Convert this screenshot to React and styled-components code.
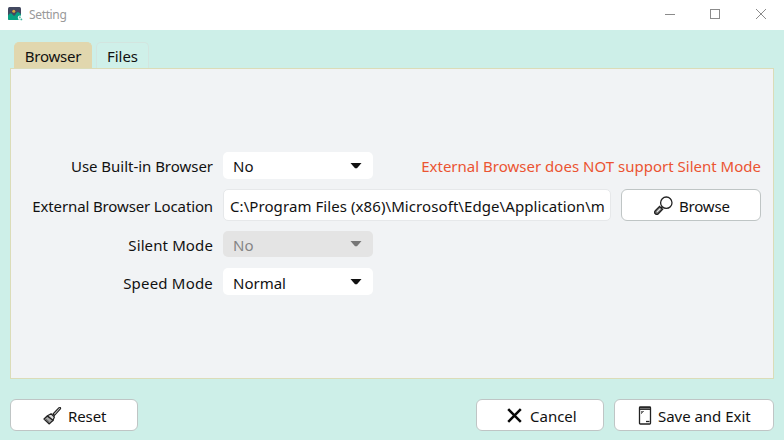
import React from 'react';
import styled, { createGlobalStyle } from 'styled-components';

const GlobalStyle = createGlobalStyle`
  * { box-sizing: border-box; }
  body { margin: 0; background: #cdefe8; overflow: hidden; }
  svg { display: block; flex: none; }
`;

const Window = styled.div`
  width: 784px;
  height: 440px;
  display: flex;
  flex-direction: column;
  background: #cdefe8;
  color: #111;
  font: 15px/20px "Noto Sans", "Open Sans", sans-serif;
`;

const TitleBar = styled.header`
  height: 30px;
  flex: none;
  display: flex;
  align-items: center;
  padding: 0 17px 2px 7px;
  background: #fff;
  color: #999;
`;

const Title = styled.span`
  margin-left: 6px;
  padding-top: 2px;
  font-size: 12px;
  letter-spacing: -0.35px;
  flex: 1;
`;

const WindowControls = styled.div`
  display: flex;
  gap: 33px;
  svg:last-child { margin-left: 1px; }
`;

const Label = styled.span`
  white-space: pre;
  letter-spacing: ${(p) => p.$spacing || 0}px;
`;

const TabBar = styled.nav`
  display: flex;
  gap: 4px;
  padding: 12px 14px 0;
  height: 38px;
  flex: none;
`;

const Tab = styled.div`
  width: ${(p) => p.$width}px;
  display: flex;
  justify-content: center;
  padding-top: 3px;
  border: 1px solid ${(p) => (p.$active ? '#e1d7ae' : '#d3e5df')};
  border-bottom: 0;
  border-radius: 5px 5px 0 0;
  background: ${(p) => (p.$active ? '#e1d7ae' : '#cff0e9')};
`;

const Panel = styled.main`
  height: 311px;
  margin: 0 10px;
  padding: 83px 12px 0 10px;
  border: 1px solid #dbdcb8;
  background: #f1f3f5;
`;

const Form = styled.div`
  display: grid;
  grid-template-columns: 192px 1fr;
  grid-template-rows: 27px 32px 26px 28px;
  row-gap: 10px;
  column-gap: 10px;
  align-items: stretch;
`;

const FieldName = styled.label`
  display: flex;
  align-items: center;
  justify-content: flex-end;
  padding-top: ${(p) => p.$drop || 1}px;
`;

const FieldArea = styled.div`
  display: flex;
  justify-content: space-between;
  padding-top: ${(p) => p.$drop || 0}px;
`;

const Select = styled.div`
  width: 150px;
  display: flex;
  align-items: center;
  justify-content: space-between;
  padding: ${(p) => p.$drop || 1}px 11px 0 10px;
  border-radius: 5px;
  background: ${(p) => (p.$disabled ? '#e4e4e4' : '#fff')};
  color: ${(p) => (p.$disabled ? '#858585' : '#111')};
  svg { margin-top: -1px; }
`;

const Warning = styled.div`
  display: flex;
  align-items: center;
  padding-top: 1px;
  color: #eb5432;
`;

const PathInput = styled.div`
  width: 388px;
  display: flex;
  align-items: center;
  padding: 2px 5px 0 6px;
  overflow: hidden;
  border: 1px solid #e6e8ea;
  border-radius: 5px;
  background: #fff;
`;

const Button = styled.button`
  width: ${(p) => p.$width}px;
  height: 32px;
  display: flex;
  align-items: center;
  padding: 2px 0 0 ${(p) => p.$inset}px;
  gap: ${(p) => p.$gap}px;
  border: 1px solid #bfc5c5;
  border-radius: 6px;
  background: #fff;
  color: #111;
  font: inherit;
  svg { margin-top: -1px; }
`;

const Footer = styled.footer`
  display: flex;
  gap: 10px;
  padding: 20px 10px 0;
`;

const Spacer = styled.div`
  flex: 1;
`;

const AppIcon = () => (
  <svg width="16" height="16" viewBox="0 -1 16 16">
    <rect x="1" y="0" width="13" height="13" rx="1.500" fill="#424860" />
    <path d="M1 8.500Q3.500 4.500 5.500 7.500T9 6.500Q11 3 14 7.500v4L12.500 13h-10A1.500 1.500 0 0 1 1 11.500z" fill="#08a283" />
    <circle cx="6.800" cy="4.300" r="1.500" fill="#d8a43e" />
    <circle cx="13" cy="10.800" r="2.200" fill="#fff" />
    <circle cx="12.800" cy="10.300" r="1.100" fill="#5cc9b0" />
    <circle cx="14.400" cy="12.400" r=".9" fill="#3bb79c" />
    <circle cx="11.800" cy="12.300" r=".7" fill="#7fd4c0" />
  </svg>
);

const Minimize = () => (
  <svg width="12" height="12" viewBox="0 0 12 12"><path d="M1 6.500h10" stroke="#8b8b8b" /></svg>
);
const Maximize = () => (
  <svg width="12" height="12" viewBox="0 0 12 12"><rect x="1.500" y="1.500" width="9" height="9" fill="none" stroke="#8b8b8b" /></svg>
);
const Close = () => (
  <svg width="12" height="12" viewBox="0 0 12 12"><path d="m1 1 10 10M11 1 1 11" stroke="#8b8b8b" /></svg>
);

const Arrow = ({ color = '#111' }) => (
  <svg width="12" height="8" viewBox="0 0 12 8"><path d="M.5 1h11L7 6.200H5z" fill={color} /></svg>
);

const Magnifier = () => (
  <svg width="19" height="19" viewBox="0 0 19 19" fill="none" stroke="#222">
    <circle cx="12.300" cy="6.700" r="5.700" strokeWidth="1.300" />
    <path d="m8.200 10.800-2 2" strokeWidth="1.800" />
    <path d="m5.600 10.400 3 2.800-4.300 4.500a2.050 2.050 0 0 1-3-2.900z" fill="#777" strokeWidth="1.300" />
    <path d="m3 15.900 3.300-3.300" stroke="#eee" strokeWidth="1.100" />
  </svg>
);

const Brush = () => (
  <svg width="19" height="19" viewBox="0 0 19 19" stroke="#222" strokeLinejoin="round">
    <path d="m10 8 6-6.300q1.700-.8 1.600 1L11.500 9.500z" fill="#ccc" strokeWidth="1.100" />
    <path d="m4.500 9.800 3.600-2 3.300 3.200-1.600 3.800z" fill="#ddd" strokeWidth="1.200" />
    <path d="m4.200 10-3.200 3 5.300 4.900 3.700-3.600z" fill="#aaa" strokeWidth="1.300" />
    <path d="m3 13 3.500 3.200" strokeWidth=".5" />
  </svg>
);

const Cross = () => (
  <svg width="15" height="15" viewBox="0 0 15 15">
    <path d="m1.200 1.200 12.600 12.600M13.800 1.200 1.200 13.800" stroke="#080808" strokeWidth="2.500" />
  </svg>
);

const Notebook = () => (
  <svg width="14" height="19" viewBox="0 0 14 19" fill="none" stroke="#222">
    <rect x="1.500" y="1" width="11" height="17" rx=".8" strokeWidth="1.300" />
    <path d="M1 2.500h12" strokeWidth="2.800" />
    <path d="M2.500 2.500h9.500" stroke="#bbb" strokeDasharray="1 1" />
    <path d="M3 5.500h3M3 6.500h2M3 7.500h1" stroke="#777" />
    <path d="M8 15.500h3.500" strokeWidth="1.300" />
  </svg>
);

export default function App() {
  return (
    <>
      <GlobalStyle />
      <Window>
        <TitleBar>
          <AppIcon />
          <Title>Setting</Title>
          <WindowControls><Minimize /><Maximize /><Close /></WindowControls>
        </TitleBar>
        <TabBar>
          <Tab $width={78} $active><Label $spacing={-0.2}>Browser</Label></Tab>
          <Tab $width={53}><Label $spacing={-0.05}>Files</Label></Tab>
        </TabBar>
        <Panel>
          <Form>
            <FieldName><Label $spacing={-0.03}>Use Built-in Browser</Label></FieldName>
            <FieldArea>
              <Select><Label>No</Label><Arrow /></Select>
              <Warning><Label $spacing={0.01}>External Browser does NOT support Silent Mode</Label></Warning>
            </FieldArea>
            <FieldName><Label $spacing={-0.13}>External Browser Location</Label></FieldName>
            <FieldArea>
              <PathInput><Label $spacing={0.08}>C:\Program Files (x86)\Microsoft\Edge\Application\m</Label></PathInput>
              <Button $width={140} $inset={32} $gap={6}><Magnifier /><Label $spacing={-0.2}>Browse</Label></Button>
            </FieldArea>
            <FieldName><Label $spacing={0.12}>Silent Mode</Label></FieldName>
            <FieldArea><Select $disabled><Label>No</Label><Arrow color="#777" /></Select></FieldArea>
            <FieldName $drop={3}><Label $spacing={0.2}>Speed Mode</Label></FieldName>
            <FieldArea $drop={1}><Select $drop={2}><Label $spacing={0}>Normal</Label><Arrow /></Select></FieldArea>
          </Form>
        </Panel>
        <Footer>
          <Button $width={128} $inset={32} $gap={6}><Brush /><Label $spacing={-0.1}>Reset</Label></Button>
          <Spacer />
          <Button $width={128} $inset={30} $gap={8}><Cross /><Label $spacing={0}>Cancel</Label></Button>
          <Button $width={160} $inset={23} $gap={6}><Notebook /><Label $spacing={-0.03}>Save and Exit</Label></Button>
        </Footer>
      </Window>
    </>
  );
}
